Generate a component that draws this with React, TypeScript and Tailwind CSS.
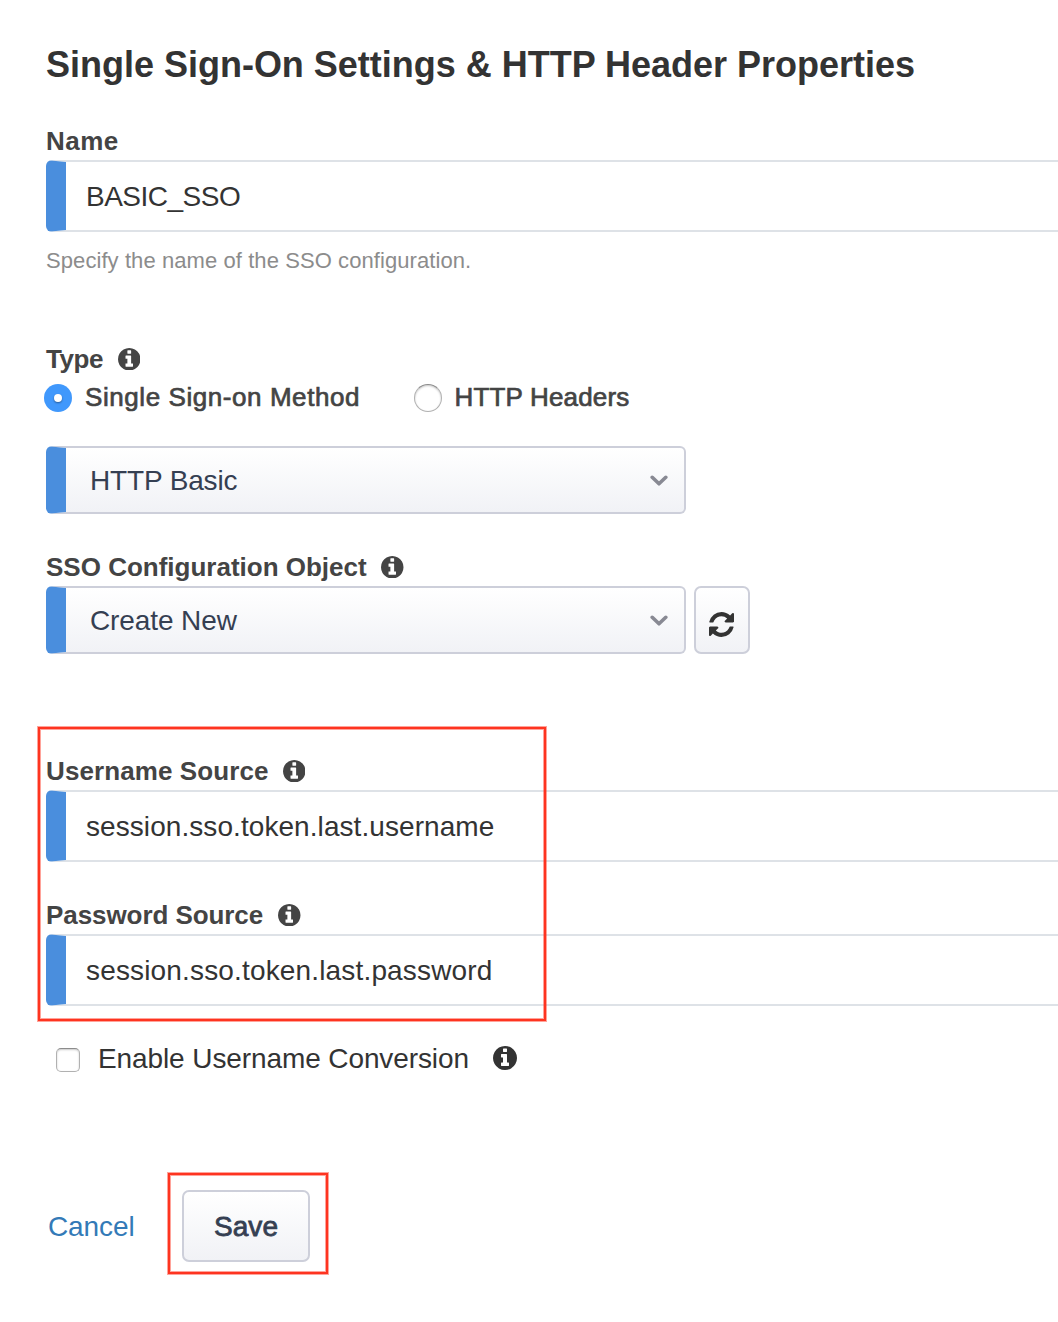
import React from "react";

function InfoIcon({ className }: { className: string }) {
  return (
    <svg viewBox="0 128 1536 1536" fill="currentColor" className={className} aria-hidden="true">
      <path d="M1024 1376v-160q0-14-9-23t-23-9h-96v-512q0-14-9-23t-23-9h-320q-14 0-23 9t-9 23v160q0 14 9 23t23 9h96v320h-96q-14 0-23 9t-9 23v160q0 14 9 23t23 9h448q14 0 23-9t9-23zm-128-896v-160q0-14-9-23t-23-9h-192q-14 0-23 9t-9 23v160q0 14 9 23t23 9h192q14 0 23-9t9-23zm640 416q0 209-103 385.5t-279.5 279.5-385.5 103-385.5-103-279.5-279.5-103-385.5 103-385.5 279.5-279.5 385.5-103 385.5 103 279.5 279.5 103 385.5z" />
    </svg>
  );
}

function RefreshIcon() {
  return (
    <svg viewBox="0 128 1536 1536" fill="currentColor" className="mt-2 mr-px size-[25px]" aria-hidden="true">
      <path d="M1511 1056q0 5-1 7-64 268-268 434.5t-478 166.5q-146 0-282.5-55t-243.5-157l-129 129q-19 19-45 19t-45-19-19-45v-448q0-26 19-45t45-19h448q26 0 45 19t19 45-19 45l-137 137q71 66 161 102t187 36q134 0 250-65t186-179q11-17 53-117 8-23 30-23h192q13 0 22.5 9.5t9.5 22.5zm25-800v448q0 26-19 45t-45 19h-448q-26 0-45-19t-19-45 19-45l138-138q-148-137-349-137-134 0-250 65t-186 179q-11 17-53 117-8 23-30 23h-199q-13 0-22.5-9.5t-9.5-22.5v-7q65-268 270-434.5t480-166.5q146 0 284 55.5t245 156.5l130-129q19-19 45-19t45 19 19 45z" />
    </svg>
  );
}

function Label({ text, spacing, info = true }: { text: string; spacing: string; info?: boolean }) {
  return (
    <div className="flex h-[38px] items-center text-[26px] font-bold text-[#444]">
      <span className={spacing}>{text}</span>
      {info && <InfoIcon className="size-[22.5px]" />}
    </div>
  );
}

function TextField({ value, spacing }: { value: string; spacing: string }) {
  return (
    <div className="flex h-[72px] items-center rounded-l-[6px] border-y-2 border-l-[20px] border-y-[#dee2e7] border-l-[#4a8edd] bg-white pt-0.5 pl-5 text-[28px] text-[#333]">
      <span className={spacing}>{value}</span>
    </div>
  );
}

function Select({ value, spacing }: { value: string; spacing: string }) {
  return (
    <div className="flex h-[68px] w-[640px] items-center justify-between rounded-[6px] border-2 border-l-[20px] border-[#cdcfda] border-l-[#4a8edd] bg-linear-to-b from-white to-[#f1f2f6] pr-4 pl-6 text-[28px] text-[#353f52]">
      <span className={`mt-0.5 ${spacing}`}>{value}</span>
      <svg viewBox="0 0 18 12" className="mt-0.5 h-3 w-[18px]" fill="none" stroke="#888993" strokeWidth="3.6" strokeLinecap="round" strokeLinejoin="round">
        <path d="M2.2 2.3 9 8.8l6.8-6.5" />
      </svg>
    </div>
  );
}

function Highlight({ className }: { className: string }) {
  return (
    <div
      className={`pointer-events-none absolute border-2 border-[#fe3420] shadow-[0_0_0_1px_rgba(254,52,32,0.45),inset_0_0_0_1px_rgba(254,52,32,0.45)] ${className}`}
    />
  );
}

export default function App() {
  return (
    <main className="h-[1322px] overflow-hidden bg-white pt-[42px] pl-[46px] font-['Liberation_Sans',Arial,sans-serif] whitespace-nowrap">
      <h1 className="flex h-11 items-center pt-px text-[36px] font-bold tracking-[-0.01px] text-[#333]">
        Single Sign-On Settings &amp; HTTP Header Properties
      </h1>

      <section className="mt-9">
        <Label text="Name" spacing="tracking-[0.5px]" info={false} />
        <TextField value="BASIC_SSO" spacing="tracking-[-0.5px]" />
        <p className="mt-3 flex h-8 items-center text-[22px] tracking-[0.08px] text-[#8c8c8c]">
          Specify the name of the SSO configuration.
        </p>
      </section>

      <section className="mt-16">
        <Label text="Type" spacing="mr-[15px] tracking-[-0.45px]" />
        <div className="-ml-0.5 flex h-10 items-center text-[26px] text-[#444] [-webkit-text-stroke:0.7px_#444]">
          <span className="flex size-7 items-center justify-center rounded-full bg-[#4098fc]">
            <span className="size-2 rounded-full bg-white shadow-[0_1px_2px_rgba(0,0,0,0.4)]" />
          </span>
          <span className="-mt-0.5 ml-[13px] w-[329px] tracking-[0.57px]">Single Sign-on Method</span>
          <span className="size-7 rounded-full border border-[#b1b1b1] border-t-[#8c8c8c] bg-white shadow-[inset_0_1px_2px_rgba(0,0,0,0.22)]" />
          <span className="-mt-0.5 ml-[12.5px] tracking-[0.17px]">HTTP Headers</span>
        </div>
        <div className="mt-7">
          <Select value="HTTP Basic" spacing="tracking-[-0.15px]" />
        </div>
      </section>

      <section className="mt-[34px]">
        <Label text="SSO Configuration Object" spacing="mr-[14.5px] tracking-[0px]" />
        <div className="flex gap-2">
          <Select value="Create New" spacing="tracking-[-0.1px]" />
          <div className="flex h-[68px] w-14 items-center justify-center rounded-[7px] border-2 border-[#cdcfda] bg-linear-to-b from-white to-[#f1f2f6] text-[#333]">
            <RefreshIcon />
          </div>
        </div>
      </section>

      <section className="relative mt-[98px]">
        <Label text="Username Source" spacing="mr-[14px] tracking-[0.1px]" />
        <TextField value="session.sso.token.last.username" spacing="tracking-[0.07px]" />
        <div className="mt-[34px]">
          <Label text="Password Source" spacing="mr-[15px] tracking-[-0.07px]" />
          <TextField value="session.sso.token.last.password" spacing="tracking-[0.16px]" />
        </div>
        <Highlight className="-top-[25px] -left-2 h-[294px] w-[508px]" />
      </section>

      <div className="mt-8 ml-2.5 flex h-10 items-center text-[28px] text-[#333]">
        <span className="mt-1 size-6 rounded-[5px] border border-[#b1b1b1] border-t-[#8c8c8c] bg-white shadow-[inset_0_1px_2px_rgba(0,0,0,0.22)]" />
        <span className="mt-0.5 ml-[18px] w-[371px] tracking-[-0.1px]">Enable Username Conversion</span>
        <InfoIcon className="ml-[24px] size-6" />
      </div>

      <div className="mt-28 flex h-[72px] items-center text-[28px]">
        <a className="mt-0.5 w-[136px] pl-0.5 tracking-[-0.1px] text-[#337ab7]">Cancel</a>
        <div className="relative flex h-[72px] w-32 items-center justify-center rounded-[7px] border-2 border-[#cdcfda] bg-linear-to-b from-white to-[#f1f2f6] pt-0.5 tracking-[0.05px] text-[#353f52] [-webkit-text-stroke:0.8px_#353f52]">
          Save
          <Highlight className="-top-[19px] -left-4 h-[101px] w-40" />
        </div>
      </div>
    </main>
  );
}
